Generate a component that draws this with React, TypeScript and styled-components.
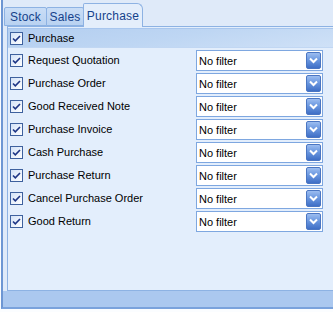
import React from 'react'
import styled, { createGlobalStyle } from 'styled-components'

const GlobalStyle = createGlobalStyle`
  html, body {
    margin: 0;
    padding: 0;
    overflow: hidden;
    background: #fbfdff;
  }
  body {
    font-family: 'Liberation Sans', Arial, sans-serif;
    font-size: 11px;
  }
`

const Frame = styled.div`
  box-sizing: border-box;
  margin-left: 1px;
  width: calc(100vw - 1px);
  height: 309px;
  overflow: hidden;
  display: flex;
  flex-flow: column nowrap;
  background: #dfeaf9;
  border-left: 2px solid #6d96d3;
  border-bottom: 2px solid #7aa2dc;
  box-shadow: 0 1px 0 #f4f8fd, 0 2px 0 #3f639f;
`

const TabStrip = styled.div`
  height: 26px;
  display: flex;
  align-items: flex-end;
  padding-left: 1px;
  position: relative;
  z-index: 1;
`

const Tab = styled.div<{ $active?: boolean; $width: number }>`
  box-sizing: border-box;
  width: ${p => p.$width}px;
  height: ${p => (p.$active ? 24 : 19)}px;
  margin-bottom: ${p => (p.$active ? -1 : 0)}px;
  margin-right: ${p => (p.$active ? 0 : -1)}px;
  display: flex;
  align-items: center;
  justify-content: center;
  padding-top: 1px;
  color: #15428b;
  font-size: 12px;
  letter-spacing: 0.2px;
  border: 1px solid #8db2e3;
  border-bottom: ${p => (p.$active ? '0' : '1px solid #8db2e3')};
  border-radius: ${p => (p.$active ? '2px 6px 0 0' : '2px 2px 0 0')};
  background: ${p =>
    p.$active
      ? '#e4eefb'
      : 'linear-gradient(#c9ddf6, #b9d2f1)'};
`

const Panel = styled.div`
  margin-left: 4px;
  flex: 1;
  display: flex;
  flex-flow: column nowrap;
  background: #e3eefc;
  border-top: 1px solid #8db2e3;
  border-left: 1px solid #8db2e3;
  border-bottom: 1px solid #8db2e3;
  padding-top: 1px;
`

const HeaderBand = styled.div`
  height: 18px;
  display: flex;
  align-items: center;
  padding-left: 2px;
  border-top: 1px solid #a8c6ee;
  border-bottom: 1px solid #c1d7f3;
  background: linear-gradient(170deg, #b3cef0 0%, #bed6f3 50%, #cfe1f7 100%);
`

const Rows = styled.div`
  display: flex;
  flex-flow: column nowrap;
  gap: 2px;
  padding-top: 2px;
`

const Row = styled.div`
  height: 21px;
  display: flex;
  align-items: center;
  padding-left: 2px;
`

const Label = styled.span`
  color: #000;
  font-size: 11px;
  margin-left: 5px;
  flex: 0 0 168px;
  white-space: nowrap;
  margin-top: -1px;
`

const Box = styled.span`
  box-sizing: border-box;
  width: 13px;
  height: 13px;
  display: inline-flex;
  align-items: center;
  justify-content: center;
  border: 1px solid #3e619e;
  background: linear-gradient(135deg, #d3e2f7, #ffffff);
  svg {
    display: block;
  }
`

const Combo = styled.div`
  box-sizing: border-box;
  width: 127px;
  height: 21px;
  display: flex;
  align-items: center;
  justify-content: space-between;
  background: #fff;
  border: 1px solid #7ea7e0;
  padding: 0 1px 0 2px;
  font-size: 11px;
  color: #000;
`

const DropButton = styled.span`
  box-sizing: border-box;
  width: 15px;
  height: 17px;
  display: inline-flex;
  align-items: center;
  justify-content: center;
  border-radius: 2px;
  border: 1px solid #4b76c2;
  background: linear-gradient(#9cbdf0 0%, #6b98e0 45%, #3f6fc6 100%);
`

const BottomBand = styled.div`
  height: 16px;
  background: #abc8ef;
`

const Check = () => (
  <Box>
    <svg width="9" height="9" viewBox="0 0 9 9">
      <path d="M1 4.5 L3.3 6.8 L8 2" fill="none" stroke="#1d3585" strokeWidth="1.6" />
    </svg>
  </Box>
)

const Filter = () => (
  <Combo>
    <span>No filter</span>
    <DropButton>
      <svg width="9" height="7" viewBox="0 0 9 7">
        <path d="M1 1.5 L4.5 5 L8 1.5" fill="none" stroke="#fff" strokeWidth="2" />
      </svg>
    </DropButton>
  </Combo>
)

const items = [
  'Request Quotation',
  'Purchase Order',
  'Good Received Note',
  'Purchase Invoice',
  'Cash Purchase',
  'Purchase Return',
  'Cancel Purchase Order',
  'Good Return',
]

const App = () => (
  <>
    <GlobalStyle />
    <Frame>
      <TabStrip>
        <Tab $width={43}>Stock</Tab>
        <Tab $width={38}>Sales</Tab>
        <Tab $width={60} $active>Purchase</Tab>
      </TabStrip>
      <Panel>
        <HeaderBand>
          <Check />
          <Label>Purchase</Label>
        </HeaderBand>
        <Rows>
          {items.map(name => (
            <Row key={name}>
              <Check />
              <Label>{name}</Label>
              <Filter />
            </Row>
          ))}
        </Rows>
      </Panel>
      <BottomBand />
    </Frame>
  </>
)

export default App
